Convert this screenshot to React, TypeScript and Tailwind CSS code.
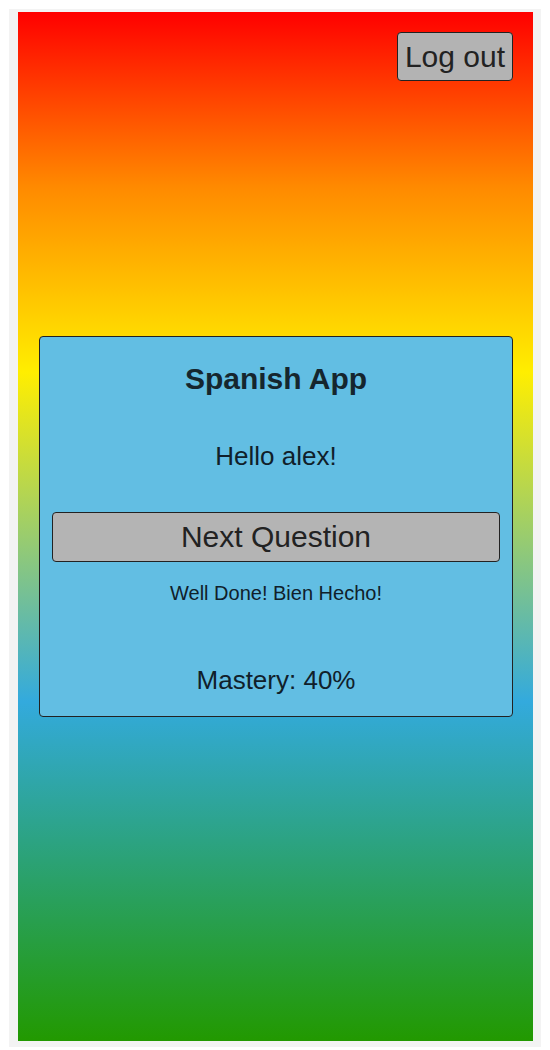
export default function App() {
  return (
    <div className="h-[1050px] bg-white px-[9px] pt-[9px] pb-[3px] font-['Liberation_Sans',Arial,sans-serif]">
      <div className="h-full bg-[#f3f3f3] pt-[3px] pl-[9px] pr-[8px] pb-[6px]">
        {/* gradient stage — card sits centred, log out floats top-right */}
        <div className="relative flex h-full flex-col justify-center bg-[linear-gradient(to_bottom,#ff0000_0%,#ff8a00_17%,#ffee00_35%,#33aadd_67%,#229900_100%)] pl-[21px] pr-[20px]">
          <button className="absolute right-[20px] top-[20px] flex h-[49px] items-center rounded-[4px] border border-[#222] bg-[#b3b3b3] px-[7px] text-[30px] leading-none text-[#222]">
            Log out
          </button>

          <div className="flex h-[381px] flex-col items-center rounded-[4px] border border-[#222] bg-[#62bee3] px-[12px] pt-[24px] text-[#10202a]">
            <h1 className="text-[30px] font-bold leading-[36px] text-[#15262e]">Spanish App</h1>
            <p className="mt-[44px] text-[26px] leading-[30px]">Hello alex!</p>
            <button className="mt-[41px] h-[50px] w-full rounded-[4px] border border-[#222] bg-[#b4b4b4] text-[30px] leading-none text-[#222]">
              Next Question
            </button>
            <p className="mt-[20px] text-[20px] leading-[22px]">Well Done! Bien Hecho!</p>
            <p className="mt-[61px] text-[26px] leading-[30px]">Mastery: 40%</p>
          </div>
        </div>
      </div>
    </div>
  )
}
